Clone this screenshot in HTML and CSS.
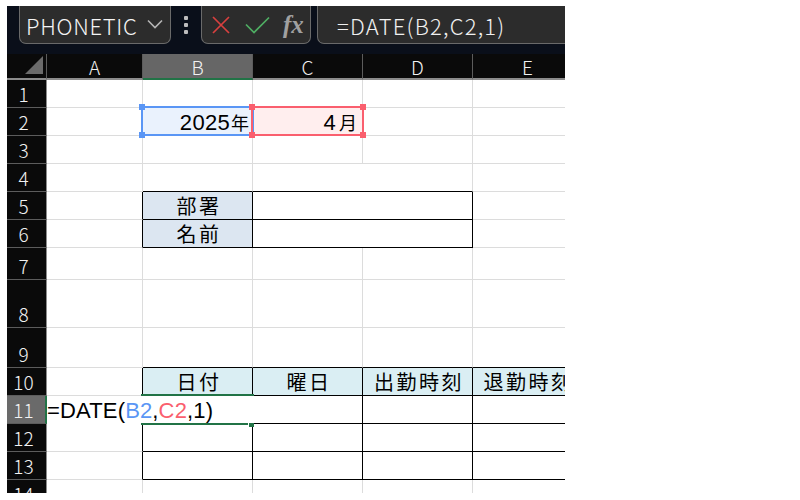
FILE: index.html
```html
<!DOCTYPE html>
<html lang="ja">
<head>
<meta charset="utf-8">
<title>DATE</title>
<link rel="stylesheet" href="styles.css">
</head>
<body>
<div class="app">
  <div class="toolbar">
    <div class="box namebox"><span class="name">PHONETIC</span>
      <svg class="chev" width="16" height="10" viewBox="0 0 16 10"><path d="M1 1.5 8 8.5 15 1.5" fill="none" stroke="#b5b5b5" stroke-width="1.6"/></svg>
    </div>
    <div class="dots"><i></i><i></i><i></i></div>
    <div class="box fxbox">
      <svg width="18" height="18" viewBox="0 0 18 18"><path d="M1 1 17 17M17 1 1 17" fill="none" stroke="#d8403f" stroke-width="1.7"/></svg>
      <svg width="25" height="18" viewBox="0 0 25 18"><path d="M1 8.5 9 16.5 24 1.5" fill="none" stroke="#4fae63" stroke-width="1.7"/></svg>
      <span class="fx">fx</span>
    </div>
    <div class="box formula">=DATE(B2,C2,1)</div>
  </div>
  <div class="sheet">
    <div class="hd corner"><svg width="18" height="18" viewBox="0 0 18 18"><path d="M18 0V18H0Z" fill="#6b6b6b"/></svg></div>
    <div class="hd">A</div><div class="hd hd-on">B</div><div class="hd">C</div><div class="hd">D</div><div class="hd">E</div>

    <div class="rh">1</div><div class="c"></div><div class="c"></div><div class="c"></div><div class="c"></div><div class="c"></div>

    <div class="rh">2</div><div class="c"></div>
    <div class="c val blue">2025<span class="ja">年</span>
      <div class="range range-b"><b class="h h-tl"></b><b class="h h-bl"></b></div>
    </div>
    <div class="c val red">4<span class="ja ja-m">月</span>
      <div class="range range-r"><b class="h h-tl"></b><b class="h h-bl"></b><b class="h h-tr"></b><b class="h h-br"></b></div>
    </div>
    <div class="c"></div><div class="c"></div>

    <div class="rh">3</div><div class="c"></div><div class="c"></div><div class="c"></div><div class="c"></div><div class="c"></div>

    <div class="rh">4</div><div class="c"></div><div class="c kb"></div><div class="c s2 kb"></div><div class="c"></div>

    <div class="rh">5</div><div class="c kr"></div><div class="c k lab">部署</div><div class="c s2 k"></div><div class="c"></div>

    <div class="rh">6</div><div class="c kr"></div><div class="c k lab">名前</div><div class="c s2 k"></div><div class="c"></div>

    <div class="rh low">7</div><div class="c"></div><div class="c"></div><div class="c"></div><div class="c"></div><div class="c"></div>
    <div class="rh low">8</div><div class="c"></div><div class="c"></div><div class="c"></div><div class="c"></div><div class="c"></div>

    <div class="rh low">9</div><div class="c"></div><div class="c kb"></div><div class="c kb"></div><div class="c kb"></div><div class="c kb"></div>

    <div class="rh">10</div><div class="c kr"></div><div class="c k th">日付</div><div class="c k th">曜日</div><div class="c k th">出勤時刻</div><div class="c k th th-e">退勤時刻</div>

    <div class="rh rh-on">11</div>
    <div class="c edit">=DATE(<span class="ref-b">B2</span>,<span class="ref-r">C2</span>,1)</div>
    <div class="c active"><b class="fill"></b></div><div class="c k"></div><div class="c k"></div><div class="c k"></div>

    <div class="rh">12</div><div class="c kr"></div><div class="c k"></div><div class="c k"></div><div class="c k"></div><div class="c k"></div>
    <div class="rh">13</div><div class="c kr"></div><div class="c k"></div><div class="c k"></div><div class="c k"></div><div class="c k"></div>
    <div class="rh">14</div><div class="c"></div><div class="c"></div><div class="c"></div><div class="c"></div><div class="c"></div>
  </div>
</div>
</body>
</html>
```
FILE: styles.css
```css
* { box-sizing: border-box; }
html, body { margin: 0; background: #fff; }
body { padding: 6px 0 0 7px; }

.app {
  width: 558px;
  height: 487px;
  overflow: hidden;
  font-family: "Liberation Sans", "Noto Sans CJK JP", sans-serif;
}

/* toolbar */
.toolbar {
  height: 48px;
  background: #0a0f1a;
  display: flex;
  align-items: flex-start;
  padding-left: 12px;
}
.box {
  height: 38px;
  background: #2c2c2c;
  border: 1px solid #6a6a6a;
  border-top: 0;
  border-radius: 0 0 7px 7px;
  display: flex;
  align-items: center;
}
.namebox { width: 152px; padding: 0 7px 0 6px; justify-content: space-between; }
.name {
  font-family: "Noto Sans CJK JP", sans-serif;
  font-weight: 300;
  font-size: 22px;
  color: #f4f4f4;
  letter-spacing: 0.7px;
}
.chev { margin-top: -1px; }
.dots { width: 30px; display: flex; flex-direction: column; align-items: center; gap: 3px; padding-top: 10px; }
.dots i { width: 4px; height: 4px; background: #bdbdbd; border-radius: 1px; }
.fxbox { width: 110px; padding-left: 10px; gap: 15px; }
.fx {
  font-family: "Liberation Serif", serif;
  font-style: italic;
  font-weight: 700;
  font-size: 25px;
  line-height: 30px;
  color: #a0a0a0;
  margin-left: -2px;
}
.formula {
  flex: 1;
  margin-left: 6px;
  border-right: 0;
  border-radius: 0 0 0 7px;
  padding-left: 19px;
  font-family: "Noto Sans CJK JP", sans-serif;
  font-weight: 300;
  font-size: 22px;
  color: #f0f0f0;
  letter-spacing: 1.2px;
}

/* sheet */
.sheet {
  display: grid;
  grid-template-columns: 40px 96px 110px 110px 110px 110px;
  grid-template-rows: 26px repeat(6, 28px) 32px 48px 40px repeat(5, 28px);
}
.hd {
  background: #0a0a0a;
  border-right: 1px solid #5c5c5c;
  border-bottom: 2px solid #8c8c8c;
  color: #f2f2f2;
  font-family: "Noto Sans CJK JP", sans-serif;
  font-weight: 300;
  font-size: 19px;
  line-height: 24px;
  text-align: center;
  padding-top: 1px;
}
.corner { display: flex; align-items: center; justify-content: flex-end; padding: 0 3px 2px 0; }
.hd-on { background: #666; border-bottom-color: #217346; }
.rh {
  background: #0a0a0a;
  border-right: 1px solid #8c8c8c;
  border-bottom: 1px solid #5c5c5c;
  color: #f2f2f2;
  font-family: "Noto Sans CJK JP", sans-serif;
  font-weight: 300;
  font-size: 19px;
  line-height: 26px;
  display: flex;
  align-items: flex-end;
  justify-content: center;
  padding-right: 6px;
}
.rh-on { background: #6a6a6a; border-right: 2px solid #217346; padding-right: 5px; }
.c {
  border-right: 1px solid #dcdcdc;
  border-bottom: 1px solid #dcdcdc;
  position: relative;
  color: #000;
}
.s2 { grid-column: span 2; }
.k { border-right: 1px solid #000; border-bottom: 1px solid #000; }
.kb { border-bottom: 1px solid #000; }
.kr { border-right: 1px solid #000; }
.val {
  font-size: 22px;
  line-height: 29px;
  letter-spacing: 0.3px;
  text-align: right;
  padding-right: 3px;
  white-space: nowrap;
}
.ja { font-family: "Noto Sans CJK JP", sans-serif; font-size: 18px; margin-left: 1px; letter-spacing: 0; }
.ja-m { margin-left: 3px; padding-right: 2px; }
.blue { background: #eaf2fd; }
.red { background: #ffeeee; }
.range { position: absolute; inset: -2px -2px -1px -2px; border: 2px solid; }
.range-b { border-color: #5a96f5; z-index: 2; }
.range-r { border-color: #fa5f6e; z-index: 3; }
.h { position: absolute; width: 6px; height: 6px; }
.range-b .h { background: #5a96f5; }
.range-r .h { background: #fa5f6e; }
.h-tl { left: -4px; top: -4px; }
.h-bl { left: -4px; bottom: -4px; }
.h-tr { right: -4px; top: -4px; }
.h-br { right: -4px; bottom: -4px; }

.lab, .th {
  font-family: "Noto Sans CJK JP", sans-serif;
  font-size: 20px;
  line-height: 27px;
  text-align: center;
  white-space: nowrap;
  letter-spacing: 2.5px;
  text-indent: 3px;
  overflow: hidden;
}
.lab { background: #dce6f1; }
.th { background: #daeef3; }
.th-e { text-indent: 2px; }

.edit {
  border: 0;
  font-size: 22px;
  letter-spacing: 0.15px;
  line-height: 29px;
  white-space: nowrap;
  z-index: 4;
}
.ref-b { color: #5a96f5; }
.ref-r { color: #fa5f6e; }

.active { border: 0; z-index: 1; }
.active::before {
  content: "";
  position: absolute;
  left: -2px; right: -1px; top: -2px;
  height: 2px;
  background: #217346;
}
.active::after {
  content: "";
  position: absolute;
  left: -2px; right: 5px; bottom: -1px;
  height: 2px;
  background: #217346;
}
.fill {
  position: absolute;
  right: -1px; bottom: -3px;
  width: 5px; height: 4px;
  background: #217346;
}
```
